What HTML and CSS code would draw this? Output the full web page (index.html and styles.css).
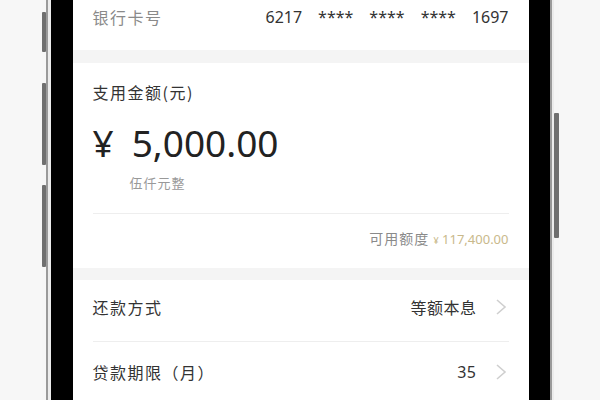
FILE: index.html
```html
<!DOCTYPE html>
<html lang="zh-CN">

<head>
    <meta charset="UTF-8">
    <meta name="viewport" content="width=device-width, initial-scale=1.0">
    <title>借款确认</title>
    <link rel="stylesheet" href="styles.css">
</head>

<body>
    <div class="scene">
        <div class="desk"></div>

        <!-- left edge of the phone: volume keys + frame -->
        <div class="keys keys-left">
            <span class="key key-a"></span>
            <span class="key key-b"></span>
            <span class="key key-c"></span>
        </div>
        <div class="rim"></div>
        <div class="gap"></div>
        <div class="bezel"></div>

        <div class="screen">
            <div class="card-row">
                <span class="label muted">银行卡号</span>
                <span class="card-no">
                    <span>6217</span><span>****</span><span>****</span><span>****</span><span>1697</span>
                </span>
            </div>

            <div class="band"></div>

            <div class="amount-box">
                <p class="label">支用金额(元)</p>
                <p class="amount"><span class="yen">¥</span>5,000.00</p>
                <p class="amount-cn">伍仟元整</p>
                <div class="line"></div>
                <p class="quota">可用额度 <span class="quota-num"><small>¥</small> 117,400.00</span></p>
            </div>

            <div class="band band-b"></div>

            <div class="item item-first">
                <span class="label">还款方式</span>
                <span class="value">等额本息
                    <svg class="chev" width="12" height="18" viewBox="0 0 12 18">
                        <polyline points="2,2 10,9 2,16" fill="none" stroke="#cfcfcf" stroke-width="1.6" />
                    </svg>
                </span>
            </div>
            <div class="item">
                <span class="label">贷款期限（月）</span>
                <span class="value num">35
                    <svg class="chev" width="12" height="18" viewBox="0 0 12 18">
                        <polyline points="2,2 10,9 2,16" fill="none" stroke="#cfcfcf" stroke-width="1.6" />
                    </svg>
                </span>
            </div>
        </div>

        <div class="bezel bezel-right"></div>
        <div class="rim"></div>
        <div class="gap gap-right"></div>
        <div class="keys keys-right">
            <span class="key key-d"></span>
        </div>
        <div class="desk"></div>
    </div>
</body>

</html>
```

FILE: styles.css
```css
body {
    margin: 0;
    background: #f6f6f6;
    font-family: "Noto Sans CJK SC", "Noto Sans", sans-serif;
    color: #333;
}

p {
    margin: 0;
}

.scene {
    display: flex;
    height: 400px;
    overflow: hidden;
}

.desk {
    flex: 1;
    background: #f7f7f7;
}

/* phone frame pieces */
.keys {
    width: 4px;
    display: flex;
    flex-direction: column;
}

.key {
    display: block;
    background: #6f6f6f;
    border-radius: 1px;
}

.key-a {
    margin-top: 12px;
    height: 40px;
}

.key-b {
    margin-top: 31px;
    height: 82px;
}

.key-c {
    margin-top: 20px;
    height: 82px;
}

.keys-right {
    width: 5px;
}

.key-d {
    margin-top: 113px;
    height: 125px;
}

.rim {
    width: 2px;
    background: #9a9a9a;
}

.gap {
    width: 3px;
    background: #ececec;
}

.gap-right {
    width: 2px;
}

.bezel {
    width: 22px;
    background: #000;
}

.bezel-right {
    width: 21px;
}

.screen {
    width: 456px;
    background: #fff;
}

.label {
    font-size: 16px;
    line-height: 22px;
    letter-spacing: 1.5px;
    color: #333;
}

.muted {
    color: #8a8a8a;
}

.card-row {
    height: 50px;
    padding: 6px 20px 0;
    box-sizing: border-box;
    display: flex;
    justify-content: space-between;
    align-items: flex-start;
}

.card-no {
    display: flex;
    gap: 16px;
    font-family: "Noto Sans", sans-serif;
    font-size: 16px;
    line-height: 22px;
    color: #333;
}

.band {
    height: 13px;
    background: #f4f4f4;
}

.band-b {
    height: 12px;
}

.amount-box {
    padding: 18px 20px 17px;
}

.amount {
    margin-top: 18px;
    font-family: "Noto Sans", sans-serif;
    font-size: 37px;
    line-height: 44px;
    color: #222;
}

.yen {
    margin-right: 18px;
}

.amount-cn {
    margin-top: 9px;
    padding-left: 37px;
    font-size: 13px;
    line-height: 18px;
    letter-spacing: 1px;
    color: #999;
}

.line {
    margin-top: 21px;
    height: 1px;
    background: #eeeeee;
}

.quota {
    margin-top: 14px;
    text-align: right;
    font-size: 14px;
    line-height: 20px;
    letter-spacing: 1px;
    color: #8a8a8a;
}

.quota-num {
    font-family: "Noto Sans", sans-serif;
    font-size: 13px;
    letter-spacing: 0;
    color: #c9b98b;
}

.quota-num small {
    font-size: 9px;
}

.item {
    margin: 0 20px;
    padding: 19px 0 20px;
    display: flex;
    justify-content: space-between;
    align-items: center;
}

.item-first {
    padding-top: 16px;
    padding-bottom: 23px;
    border-bottom: 1px solid #eeeeee;
}

.value {
    display: flex;
    align-items: center;
    gap: 18px;
    font-size: 16px;
    line-height: 22px;
    letter-spacing: 0.5px;
    color: #333;
}

.num {
    font-family: "Noto Sans", sans-serif;
}

.chev {
    margin-right: 2px;
}
```
